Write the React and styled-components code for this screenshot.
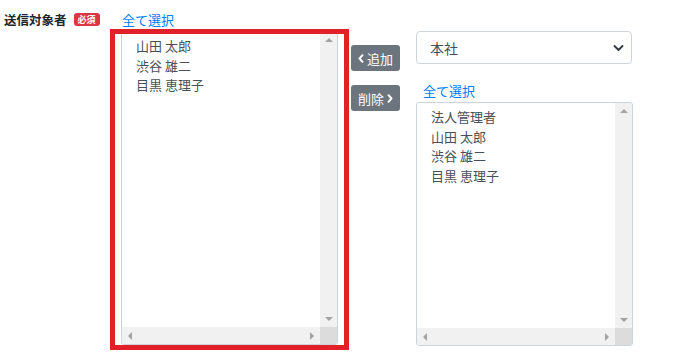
import styled, { createGlobalStyle } from 'styled-components';

const GlobalStyle = createGlobalStyle`
    body {
        margin: 0;
        background: #fff;
        font-family: "Noto Sans CJK JP", "Noto Sans", sans-serif;
        color: #212529;
    }
`;

const Page = styled.div`
    display: flex;
    align-items: flex-start;
    padding: 10px 0 14px 4px;
`;

const LabelCell = styled.div`
    display: flex;
    align-items: center;
    gap: 7px;
    width: 106px;
    height: 19px;
`;

const Label = styled.span`
    font-size: 12.5px;
    font-weight: bold;
    color: #212529;
    line-height: 19px;
`;

const Badge = styled.span`
    display: inline-flex;
    align-items: center;
    justify-content: center;
    width: 26px;
    height: 13px;
    border-radius: 3px;
    background: #dc3545;
    color: #fff;
    font-size: 9px;
    font-weight: bold;
    line-height: 1;
`;

const Column = styled.div`
    display: flex;
    flex-direction: column;
    width: ${p => p.$width}px;
    margin-left: ${p => p.$offset || 0}px;
`;

const SelectAll = styled.a`
    display: block;
    margin-left: ${p => p.$indent}px;
    margin-top: ${p => p.$top || 0}px;
    font-size: 13px;
    line-height: 19px;
    color: #007bff;
    text-decoration: none;
    cursor: pointer;
`;

const Highlight = styled.div`
    position: relative;
    margin: 2px 0 0 11px;
    width: 217px;
`;

const HighlightFrame = styled.div`
    position: absolute;
    left: -11px;
    right: -11px;
    top: -2px;
    bottom: -5px;
    border: 5px solid #e3202a;
    pointer-events: none;
`;

const ListBox = styled.div`
    position: relative;
    box-sizing: border-box;
    width: 217px;
    height: ${p => p.$height}px;
    margin-top: ${p => p.$top || 0}px;
    border: 1px solid #ced4da;
    border-radius: 3px;
    overflow: hidden;
    display: grid;
    grid-template-columns: 1fr 17px;
    grid-template-rows: 1fr 17px;
`;

const Items = styled.ul`
    list-style: none;
    margin: 0;
    padding: 4px 0 0 14px;
    font-size: 13px;
    line-height: 19.6px;
    color: #495057;
`;

const VTrack = styled.div`
    background: #f1f1f1;
    display: flex;
    flex-direction: column;
    justify-content: space-between;
    align-items: center;
    padding: 6px 0;
`;

const HTrack = styled.div`
    background: #f1f1f1;
    display: flex;
    justify-content: space-between;
    align-items: center;
    padding: 0 6px;
`;

const Corner = styled.div`
    background: #dcdcdc;
`;

const Arrow = styled.span`
    width: 0;
    height: 0;
    border: 4px solid transparent;
    ${p => p.$dir === 'up' && 'border-bottom-color: #a3a3a3; border-top-width: 0;'}
    ${p => p.$dir === 'down' && 'border-top-color: #a3a3a3; border-bottom-width: 0;'}
    ${p => p.$dir === 'left' && 'border-right-color: #a3a3a3; border-left-width: 0;'}
    ${p => p.$dir === 'right' && 'border-left-color: #a3a3a3; border-right-width: 0;'}
`;

const ButtonCol = styled.div`
    display: flex;
    flex-direction: column;
    gap: 14px;
    margin: 35px 0 0 2px;
`;

const MoveButton = styled.button`
    display: flex;
    align-items: center;
    justify-content: center;
    gap: 3px;
    width: 49px;
    height: 26px;
    padding: 0;
    border: none;
    border-radius: 3px;
    background: #6c757d;
    color: #fff;
    font-family: inherit;
    font-size: 13px;
    cursor: pointer;
`;

const Chevron = ({ dir }) => (
    <svg width="6" height="9" viewBox="0 0 6 9">
        <path
            d={dir === 'left' ? 'M4.5 1.2L1.5 4.5l3 3.3' : 'M1.5 1.2l3 3.3-3 3.3'}
            fill="none"
            stroke="#fff"
            strokeWidth="2"
            strokeLinecap="round"
            strokeLinejoin="round"
        />
    </svg>
);

const SelectBox = styled.div`
    box-sizing: border-box;
    display: flex;
    align-items: center;
    justify-content: space-between;
    height: 33px;
    margin-top: 21px;
    padding: 0 7px 0 13px;
    border: 1px solid #ced4da;
    border-radius: 4px;
    font-size: 14px;
    color: #495057;
`;

const List = ({ names, height, top }) => (
    <ListBox $height={height} $top={top}>
        <Items>
            {names.map(n => <li key={n}>{n}</li>)}
        </Items>
        <VTrack>
            <Arrow $dir="up" />
            <Arrow $dir="down" />
        </VTrack>
        <HTrack>
            <Arrow $dir="left" />
            <Arrow $dir="right" />
        </HTrack>
        <Corner />
    </ListBox>
);

const members = ['山田 太郎', '渋谷 雄二', '目黒 恵理子'];

export default function App() {
    return (
        <>
            <GlobalStyle />
            <Page>
                <LabelCell>
                    <Label>送信対象者</Label>
                    <Badge>必須</Badge>
                </LabelCell>
                <Column $width={239}>
                    <SelectAll $indent={12}>全て選択</SelectAll>
                    <Highlight>
                        <List names={members} height={314} />
                        <HighlightFrame />
                    </Highlight>
                </Column>
                <ButtonCol>
                    <MoveButton><Chevron dir="left" />追加</MoveButton>
                    <MoveButton>削除<Chevron dir="right" /></MoveButton>
                </ButtonCol>
                <Column $width={216} $offset={16}>
                    <SelectBox>
                        本社
                        <svg width="11" height="8" viewBox="0 0 16 12">
                            <path d="M2 3l6 6 6-6" fill="none" stroke="#343a40" strokeWidth="2.8" strokeLinecap="round" strokeLinejoin="round" />
                        </svg>
                    </SelectBox>
                    <SelectAll $indent={7} $top={17}>全て選択</SelectAll>
                    <List names={['法人管理者', ...members]} height={244} top={2} />
                </Column>
            </Page>
        </>
    );
}
